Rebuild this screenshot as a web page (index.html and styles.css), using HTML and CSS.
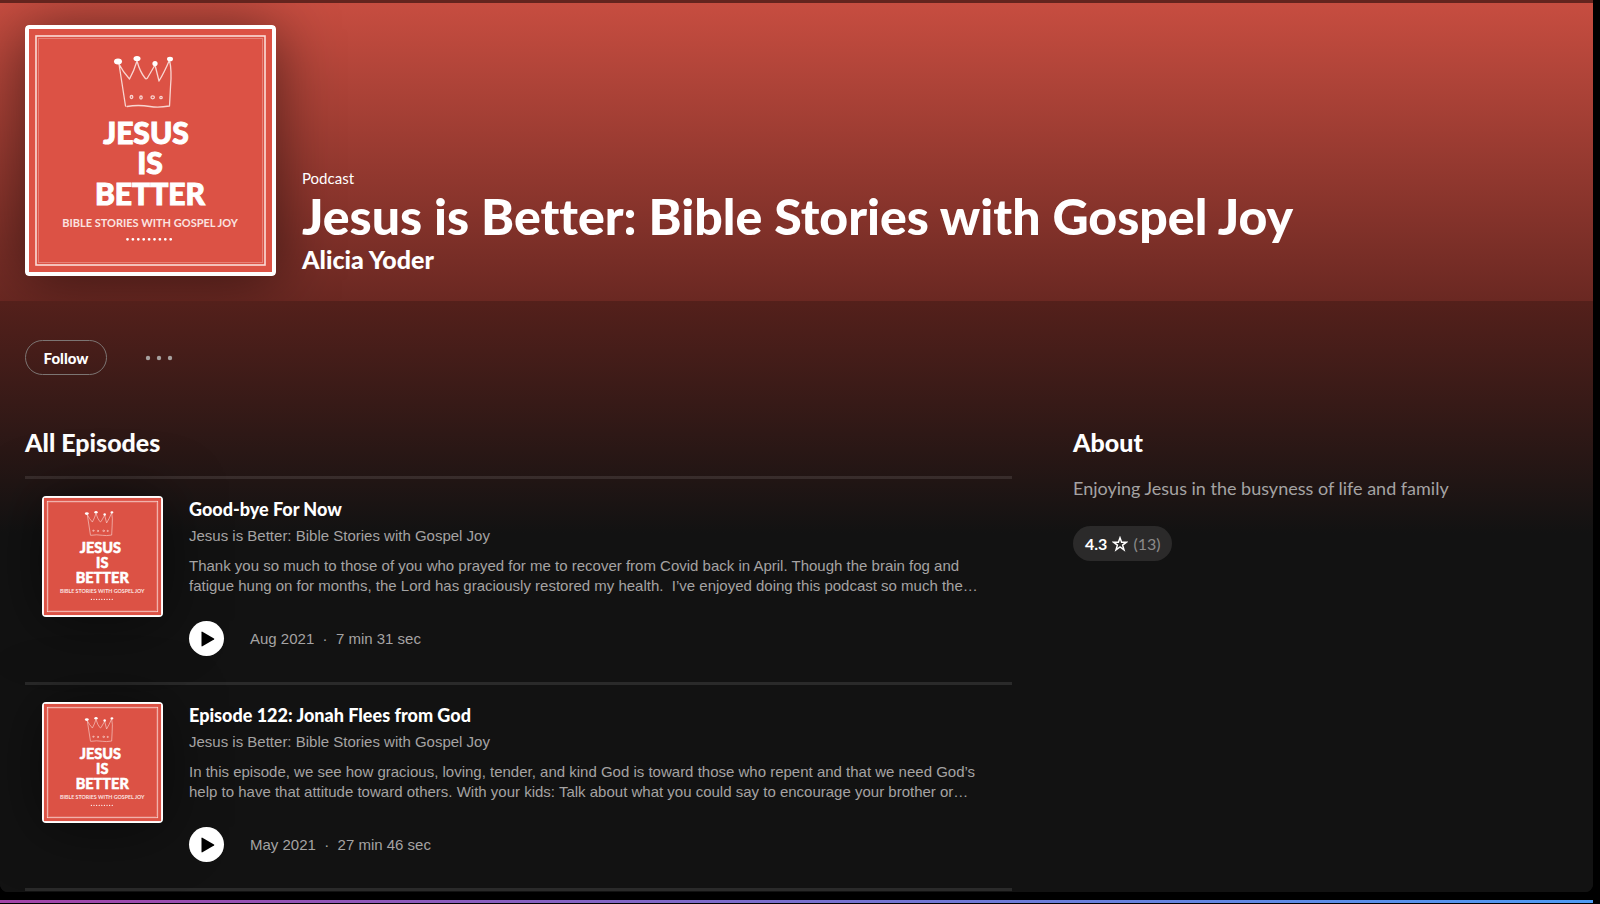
FILE: index.html
```html
<!DOCTYPE html>
<html lang="en">
<head>
    <meta charset="UTF-8">
    <meta name="viewport" content="width=device-width, initial-scale=1.0">
    <title>Jesus is Better: Bible Stories with Gospel Joy</title>
    <link rel="stylesheet" href="styles.css">
</head>
<body>
    <main class="page">
        <header class="hero">
            <!-- Cover art, reused by every episode -->
            <svg class="hero-cover" viewBox="0 0 251 251" role="img" aria-label="Podcast cover">
                <g id="cover">
                    <rect width="251" height="251" rx="4" fill="#fff"/>
                    <rect x="4" y="4" width="243" height="243" fill="#dc5245"/>
                    <rect x="11" y="11" width="229" height="229" fill="none" stroke="#fbdcd8" stroke-width="1.6"/>
                    <rect x="13.5" y="13.5" width="224" height="224" fill="none" stroke="#e68178" stroke-width="1"/>
                    <g fill="none" stroke="#f9d5d0" stroke-width="1.3" stroke-linecap="round" stroke-linejoin="round">
                        <path d="M94 39 L100.500 81 M94 39 Q98 47 104.500 54 Q109 46 112 36 Q115 47 120 53 Q121.500 55 123 52 L130 40 L134 56 Q139 48 144.500 35 Q147 46 145.500 62 L144.500 81 Q133 83 125 81.500 Q113 79.500 102 81.500"/>
                        <ellipse cx="106.500" cy="72" rx="1.300" ry="1.500"/>
                        <ellipse cx="116" cy="72.500" rx="1.200" ry="1.500"/>
                        <ellipse cx="127.700" cy="72.300" rx="1.700" ry="1.500"/>
                        <ellipse cx="136" cy="72.500" rx="1.200" ry="1.200"/>
                    </g>
                    <g fill="#fff">
                        <ellipse cx="93" cy="36.500" rx="4" ry="3"/>
                        <ellipse cx="112" cy="33.500" rx="3.500" ry="2.600"/>
                        <ellipse cx="130" cy="38.500" rx="2.600" ry="2.600"/>
                        <ellipse cx="145" cy="34" rx="3" ry="2.300"/>
                    </g>
                    <g class="cover-name">
                        <text x="121" y="119">JESUS</text>
                        <text x="125" y="149">IS</text>
                        <text x="125" y="180">BETTER</text>
                    </g>
                    <text class="cover-tagline" x="125" y="202">BIBLE STORIES WITH GOSPEL JOY</text>
                    <path d="M102.500 214.300 H147" stroke="#fff" stroke-width="2.800" stroke-linecap="round" stroke-dasharray="0 5.400"/>
                </g>
            </svg>
            <div class="hero-text">
                <p class="hero-type">Podcast</p>
                <h1>Jesus is Better: Bible Stories with Gospel Joy</h1>
                <p class="hero-author">Alicia Yoder</p>
            </div>
        </header>

        <div class="content">
            <div class="actions">
                <button class="follow" type="button">Follow</button>
                <button class="more" type="button" aria-label="More options">
                    <svg width="28" height="6" viewBox="0 0 28 6" fill="#a7a19f">
                        <circle cx="3" cy="3" r="2.200"/>
                        <circle cx="14" cy="3" r="2.200"/>
                        <circle cx="25" cy="3" r="2.200"/>
                    </svg>
                </button>
            </div>

            <div class="columns">
                <section class="episodes">
                    <h2>All Episodes</h2>

                    <article class="episode">
                        <svg class="episode-cover" viewBox="0 0 251 251" role="img" aria-label="Episode cover"><use href="#cover"/></svg>
                        <div class="episode-body">
                            <h3>Good-bye For Now</h3>
                            <p class="show">Jesus is Better: Bible Stories with Gospel Joy</p>
                            <p class="description">Thank you so much to those of you who prayed for me to recover from Covid back in April. Though the brain fog and<br>fatigue hung on for months, the Lord has graciously restored my health.&nbsp; I’ve enjoyed doing this podcast so much the…</p>
                            <div class="playback">
                                <button class="play" type="button" aria-label="Play">
                                    <svg width="14" height="16" viewBox="0 0 14 16"><path d="M.500 1.200 Q.500 .300 1.400 .700 L13 7.400 Q13.800 8 13 8.600 L1.400 15.300 Q.500 15.700 .500 14.800 Z"/></svg>
                                </button>
                                <span>Aug 2021 &nbsp;·&nbsp; 7 min 31 sec</span>
                            </div>
                        </div>
                    </article>

                    <article class="episode">
                        <svg class="episode-cover" viewBox="0 0 251 251" role="img" aria-label="Episode cover"><use href="#cover"/></svg>
                        <div class="episode-body">
                            <h3>Episode 122: Jonah Flees from God</h3>
                            <p class="show">Jesus is Better: Bible Stories with Gospel Joy</p>
                            <p class="description">In this episode, we see how gracious, loving, tender, and kind God is toward those who repent and that we need God’s<br>help to have that attitude toward others. With your kids: Talk about what you could say to encourage your brother or…</p>
                            <div class="playback">
                                <button class="play" type="button" aria-label="Play">
                                    <svg width="14" height="16" viewBox="0 0 14 16"><path d="M.500 1.200 Q.500 .300 1.400 .700 L13 7.400 Q13.800 8 13 8.600 L1.400 15.300 Q.500 15.700 .500 14.800 Z"/></svg>
                                </button>
                                <span>May 2021 &nbsp;·&nbsp; 27 min 46 sec</span>
                            </div>
                        </div>
                    </article>
                </section>

                <aside class="about">
                    <h2>About</h2>
                    <p>Enjoying Jesus in the busyness of life and family</p>
                    <button class="rating" type="button">
                        <strong>4.3</strong>
                        <svg width="16" height="16" viewBox="0 0 16 16" fill="none" stroke="#fff" stroke-width="1.500"><path d="M8 1.800 L9.600 6.200 H14.400 L10.600 9.100 L12 13.800 L8 11 L4 13.800 L5.400 9.100 L1.600 6.200 H6.400 Z"/></svg>
                        <span>(13)</span>
                    </button>
                </aside>
            </div>
        </div>
    </main>
    <div class="bottom-strip"></div>
</body>
</html>
```
FILE: styles.css
```css
* {
    box-sizing: border-box;
}
body {
    margin: 0;
    padding-right: 7px;
    background: #000;
    color: #fff;
    font-family: Lato, "Liberation Sans", sans-serif;
    font-size: 16px;
    line-height: 20px;
    font-variant-ligatures: none;
}
h1, h2, h3, p {
    margin: 0;
}
button {
    padding: 0;
    border: 0;
    background: none;
    color: #fff;
    font: inherit;
    cursor: pointer;
}
.cover-name {
    fill: #fff;
    stroke: #fff;
    stroke-width: 1px;
    font: 900 30px Lato, sans-serif;
    text-anchor: middle;
}
.cover-tagline {
    fill: #fbe3e0;
    font: 700 11px Lato, sans-serif;
    text-anchor: middle;
}
.page {
    overflow: hidden;
    border-top: 3px solid #64241e;
    border-radius: 0 0 8px 8px;
    background: #121212;
}

/* Header */
.hero {
    display: flex;
    align-items: flex-end;
    gap: 26px;
    overflow: hidden;
    padding: 22px 25px 25px;
    background: linear-gradient(#c74d40, #6a2822);
}
.hero-cover {
    flex: none;
    width: 251px;
    height: 251px;
    border-radius: 4px;
    box-shadow: 0 4px 60px rgba(0, 0, 0, 0.5);
}
.hero-text {
    padding-bottom: 2px;
}
.hero-type {
    font-size: 15px;
}
h1 {
    font-size: 50px;
    line-height: 56px;
    font-weight: 900;
}
.hero-author {
    font-size: 25px;
    line-height: 30px;
    font-weight: 900;
}

/* Content */
.content {
    padding: 39px 25px 0;
    background: linear-gradient(#54201b, #121212 232px);
}
.actions {
    display: flex;
    align-items: center;
    gap: 38px;
    margin-bottom: 52px;
}
.follow {
    width: 82px;
    height: 35px;
    border: 1px solid #7c7573;
    border-radius: 18px;
    font-size: 15px;
    font-weight: 900;
}
.more {
    display: flex;
}
.columns {
    display: grid;
    grid-template-columns: minmax(0, 987fr) minmax(0, 495fr);
    gap: 61px;
}
h2 {
    font-size: 25px;
    line-height: 30px;
    font-weight: 900;
}
.episodes h2 {
    margin-bottom: 19px;
}
.episode {
    display: flex;
    gap: 26px;
    padding: 17px 17px 26px;
    border-top: 3px solid rgba(255, 255, 255, 0.1);
}
.episode:last-child {
    border-bottom: 3px solid rgba(255, 255, 255, 0.1);
    margin-bottom: 1px;
}
.episode-cover {
    flex: none;
    width: 121px;
    height: 121px;
    border-radius: 4px;
    box-shadow: 0 4px 60px rgba(0, 0, 0, 0.5);
}
.episode-body {
    padding-top: 1px;
    color: #a5a3a3;
    font-family: "Liberation Sans", Arial, sans-serif;
    font-size: 15px;
    white-space: nowrap;
}
h3 {
    margin-bottom: 5px;
    color: #fff;
    font-family: Lato, "Liberation Sans", sans-serif;
    font-size: 18px;
    line-height: 24px;
    font-weight: 900;
}
.show {
    margin-bottom: 10px;
}
.playback {
    display: flex;
    align-items: center;
    gap: 26px;
    margin-top: 25px;
}
.play {
    display: flex;
    align-items: center;
    justify-content: center;
    width: 35px;
    height: 35px;
    padding-left: 2px;
    border-radius: 50%;
    background: #fff;
}

/* About */
.about p {
    margin: 20px 0 27px;
    color: #a5a3a3;
    font-size: 18px;
    line-height: 22px;
}
.rating {
    display: flex;
    align-items: center;
    gap: 5px;
    height: 35px;
    padding: 0 12px;
    border-radius: 18px;
    background: #2b2a2a;
}
.rating span {
    color: #8c8b8b;
}
.bottom-strip {
    height: 3px;
    margin-top: 8px;
    background: linear-gradient(90deg, #a445a8, #4f9cf5);
}
```
